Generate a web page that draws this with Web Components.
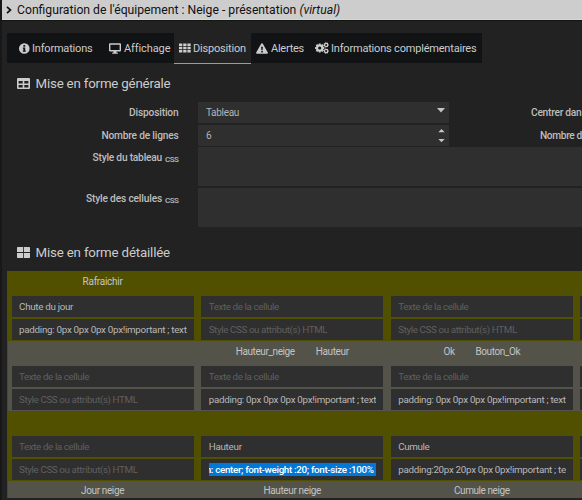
<!DOCTYPE html>
<html lang="fr"><head><meta charset="utf-8"><title>Configuration de l'équipement</title>
<style>html,body{margin:0;background:#222;overflow:hidden}body{width:582px;height:500px;font-family:Roboto,"Liberation Sans",sans-serif;color:#ccc}</style></head>
<body><equipment-config></equipment-config>
<script>
const define = (name, css, html, connected) => customElements.define(name, class extends HTMLElement {
  connectedCallback() {
    if (this.shadowRoot) return;
    this.attachShadow({mode: 'open'}).innerHTML = `<style>*{box-sizing:border-box}${css}</style>` + (typeof html === 'function' ? html(this) : html);
    if (connected) connected(this);
  }
});

// Text run that spreads its tracking over a given width.
define('fit-text', `:host{display:inline-block;white-space:pre;flex:none}`, `<slot></slot>`, el => {
  const w = parseFloat(el.getAttribute('w'));
  if (w) el.style.letterSpacing = (w - el.getBoundingClientRect().width) / el.textContent.length + 'px';
});

const gear = (cx, cy, r, n, hole) => {
  let d = '';
  for (let i = 0; i < n; i++) {
    const a = i * 2 * Math.PI / n, s = Math.PI / n;
    [[-.85, .76], [-.5, 1], [.5, 1], [.85, .76]].forEach(([o, k]) => {
      d += (d ? 'L' : 'M') + (cx + Math.cos(a + o * s) * r * k).toFixed(2) + ' ' + (cy + Math.sin(a + o * s) * r * k).toFixed(2);
    });
  }
  return `${d}ZM${cx - hole} ${cy}a${hole} ${hole} 0 1 0 ${2 * hole} 0a${hole} ${hole} 0 1 0 ${-2 * hole} 0Z`;
};
const icons = {
  chevron: [6, 8, `<path d="M1 .8 4.5 4 1 7.2" fill="none" stroke="currentColor" stroke-width="1.7"/>`],
  info: [11, 11, `<path fill-rule="evenodd" d="M5.3 .2a5.3 5.3 0 1 0 0 10.6a5.3 5.3 0 1 0 0-10.6ZM4.4 2h1.8v1.7H4.4ZM3.8 4.5h2.4v3h.6v1.2H3.8V7.5h.6V5.7H3.8Z"/>`],
  screen: [12, 11, `<path fill-rule="evenodd" d="M1 .3h10q1 0 1 1v6.2q0 1-1 1H7.3l.4 1.2h1.2v1.1H3.1V9.7h1.2l.4-1.2H1q-1 0-1-1V1.3q0-1 1-1ZM1.4 1.7v5.2h9.2V1.7Z"/>`],
  grid: [12, 10, `<path d="M0 .5h3.3v2.5H0ZM4.2.5h3.3v2.5H4.2ZM8.4.5h3.3v2.5H8.4ZM0 3.8h3.3v2.5H0ZM4.2 3.8h3.3v2.5H4.2ZM8.4 3.8h3.3v2.5H8.4ZM0 7.1h3.3v2.5H0ZM4.2 7.1h3.3v2.5H4.2ZM8.4 7.1h3.3v2.5H8.4Z"/>`],
  warning: [12, 11, `<path fill-rule="evenodd" d="M5.3.6q.7-.9 1.4 0l5.1 9q.4 1.1-.8 1.2H1Q-.2 10.7.2 9.6ZM5.1 3.7l.3 3.5h1.2l.3-3.5ZM5.2 7.9v1.5h1.6v-1.5Z"/>`],
  cogs: [14, 12, `<path fill-rule="evenodd" d="${gear(4.7, 6, 4.7, 8, 1.6)}${gear(11.1, 2.9, 2.7, 7, 1)}${gear(11.1, 9.1, 2.7, 7, 1)}"/>`],
  table: [13, 11, `<path fill-rule="evenodd" d="M1 0h11q1 0 1 1v9q0 1-1 1H1q-1 0-1-1V1q0-1 1-1ZM1.6 3v2.5h4.1V3ZM7.3 3v2.5h4.1V3ZM1.6 6.9v2.6h4.1V6.9ZM7.3 6.9v2.6h4.1V6.9Z"/>`],
  large: [13, 11, `<path d="M.6 0h5.5v5.1H0V.6ZM6.9 0h5.5l.6.6v4.5H6.9ZM0 5.9h6.1V11H.6L0 10.4ZM6.9 5.9H13v4.5l-.6.6H6.9Z"/>`]
};
define('ui-icon', `:host{display:block;flex:none}svg{display:block;fill:currentColor}`, el => {
  const [w, h, body] = icons[el.getAttribute('name')];
  return `<svg width="${w}" height="${h}" viewBox="0 0 ${w} ${h}">${body}</svg>`;
});

define('title-bar', `:host{display:flex;align-items:center;height:20px;background:#cdcdcd;color:#111;border-bottom:1px solid #d5dbd0;padding-left:4px;font-size:12.2px;white-space:pre;box-shadow:0 1px 0 #131513}ui-icon{margin-right:5px}`,
 `<ui-icon name="chevron"></ui-icon><span><slot></slot></span>`);

define('nav-tab', `:host{display:flex;align-items:center;height:30px;padding-left:var(--pad,12px);width:var(--w);background:#111315;font-size:11px;color:#ccc}
:host([active]){background:#222;height:31px;border-bottom:1px solid #93b044}ui-icon{margin-right:var(--gap,2px)}`,
 el => `<ui-icon name="${el.getAttribute('icon')}"></ui-icon><slot></slot>`);

define('section-title', `:host{display:flex;align-items:center;height:20px;font-size:13.3px;color:#ccc}ui-icon{margin-right:5.5px}`,
 el => `<ui-icon name="${el.getAttribute('icon')}"></ui-icon><slot></slot>`);

define('field-label', `:host{display:flex;justify-content:flex-end;align-items:flex-start;font-size:10.2px;line-height:21px;font-weight:500;color:#bdbdbd;padding-right:.5px}small{font-size:8px;font-weight:500;margin-left:3px;padding-top:2px}`,
 el => `<slot></slot>${el.hasAttribute('css') ? '<small><fit-text w="13.5">CSS</fit-text></small>' : ''}`);

define('form-control', `:host{display:flex;justify-content:space-between;background:#2f2f2f;font-size:10px;color:#b4b4b4;line-height:21px;padding-left:8px;height:21px}
:host([kind=area]){height:39px}.a{padding:6px 4px 0 0}.n{padding:4px 4px 0 0}svg{display:block;fill:#c4c4c4}`,
 el => `<span><slot></slot></span>` + ({select: '<div class="a"><svg width="8" height="5"><path d="M0 0h8L4 4.5Z"/></svg></div>', number: '<div class="n"><svg width="7" height="14"><path d="M.3 3.2h6.4L3.5 0ZM.3 10h6.4L3.5 13.2Z"/></svg></div>'}[el.getAttribute('kind')] || ''));

define('cell-input', `:host{display:block;height:21px;background:#2f2f2f;font-size:9.8px;line-height:21px;color:#b8b8b8;padding:0 7px 0 7.5px}
.c{overflow:hidden;height:21px;white-space:nowrap}.ph{color:#5f5f5f}`,
 el => `<div class="c ${el.getAttribute('mode') || ''}"><slot></slot></div>`);

define('cell-selection', `:host{display:flex;justify-content:flex-end;background:#0078d7;color:#fff;height:13px;line-height:13px;width:167px;margin-top:4px;padding-right:2px;font-weight:500;overflow:hidden;box-sizing:border-box}`, `<slot></slot>`);

define('layout-cell', `:host{display:flex;flex:none;flex-direction:column;width:189.6px;height:70px;padding:0 4px 0 3.6px;font-size:10px;color:#c4c4c4;box-sizing:border-box}
.names{height:25px;flex:none;display:flex;justify-content:center;line-height:22px;gap:21px}:host(.foot) .names{line-height:20px}.stack{display:grid;gap:1.5px}`,
 `<div class="names"><slot name="cmd"></slot></div><div class="stack"><slot></slot></div>`);

define('layout-row', `:host{display:flex;height:70px;width:575px;overflow:hidden;background:#535349}:host([olive]){background:#505000}:host([short]){height:17px}`, `<slot></slot>`);

const ph = (t, w) => `<cell-input mode="ph"><fit-text w="${w}">${t}</fit-text></cell-input>`;
const empty = ph('Texte de la cellule', 70), style = ph('Style CSS ou attribut(s) HTML', 118.5);
const val = (t, w) => `<cell-input><fit-text w="${w}">${t}</fit-text></cell-input>`;
const pad = val('padding: 0px 0px 0px 0px!important ; text', 167.5);
const cmd = (t, w) => `<fit-text slot="cmd" w="${w}">${t}</fit-text>`;
const cell = (...c) => `<layout-cell>${c.join('')}</layout-cell>`;
const foot = c => `<layout-cell class="foot">${c}</layout-cell>`;
const last = cell('<cell-input></cell-input>', '<cell-input></cell-input>');

define('layout-table', `:host{display:block;margin-left:5px;border-left:1px solid #48483c}`, `
<layout-row olive>${cell(cmd('Rafraichir', 40), val('Chute du jour', 54), pad)}${cell(empty, style)}${cell(empty, style)}${last}</layout-row>
<layout-row>${cell(empty, style)}${cell(cmd('Hauteur_neige', 59), cmd('Hauteur', 33), empty, pad)}${cell(cmd('Ok', 11), cmd('Bouton_Ok', 44.5), empty, pad)}${last}</layout-row>
<layout-row olive>${cell(empty, style)}${cell(val('Hauteur', 33), `<cell-input><cell-selection><fit-text w="168">n: center; font-weight :20; font-size :100%</fit-text></cell-selection></cell-input>`)}${cell(val('Cumule', 31), val('padding:20px 20px 0px 0px!important ; te', 167.5))}${last}</layout-row>
<layout-row short>${foot(cmd('Jour neige', 43))}${foot(cmd('Hauteur neige', 57.5))}${foot(cmd('Cumule neige', 55.5))}</layout-row>`);

define('equipment-config', `:host{display:block;box-sizing:border-box;width:582px;height:500px;overflow:hidden;background:#222;border-left:2px solid #181818}
nav{display:flex;margin:13px 0 0 5px;height:31px}
section-title{margin-left:15px}.s1{margin-top:9px}.s2{margin-top:15px}
.form{display:grid;grid-template-columns:177px 251px 1fr;grid-template-rows:21px 21px 39.5px 39px;row-gap:1.5px;column-gap:19px;margin-top:9px;height:125px}
.area{grid-column:2/4}.right{justify-content:flex-start}
layout-table{margin-top:9px}`, `
<title-bar>Configuration de l'équipement : Neige - présentation <i>(virtual)</i></title-bar>
<nav><nav-tab icon="info" style="--w:96px"><fit-text w="60.5">Informations</fit-text></nav-tab>
<nav-tab icon="screen" style="--w:71px;--pad:6px;--gap:3px"><fit-text w="45.5">Affichage</fit-text></nav-tab>
<nav-tab active icon="grid" style="--w:77px;--pad:5px"><fit-text w="53">Disposition</fit-text></nav-tab>
<nav-tab icon="warning" style="--w:58px;--pad:5px;--gap:3px"><fit-text w="33">Alertes</fit-text></nav-tab>
<nav-tab icon="cogs" style="--w:173px;--pad:6px"><fit-text w="145.5">Informations complémentaires</fit-text></nav-tab></nav>
<section-title class="s1" icon="table"><fit-text w="135">Mise en forme générale</fit-text></section-title>
<div class="form">
<field-label><fit-text w="49.5">Disposition</fit-text></field-label><form-control kind="select"><fit-text w="33">Tableau</fit-text></form-control><field-label class="right"><fit-text w="50.5" style="margin-left:63px">Centrer dan</fit-text></field-label>
<field-label><fit-text w="77">Nombre de lignes</fit-text></field-label><form-control kind="number">6</form-control><field-label class="right"><fit-text w="42" style="margin-left:72px">Nombre d</fit-text></field-label>
<field-label css><fit-text w="69.5">Style du tableau</fit-text></field-label><form-control kind="area" class="area"></form-control>
<field-label css><fit-text w="76">Style des cellules</fit-text></field-label><form-control kind="area" class="area"></form-control>
</div>
<section-title class="s2" icon="large"><fit-text w="134.5">Mise en forme détaillée</fit-text></section-title>
<layout-table></layout-table>`);
</script></body></html>
